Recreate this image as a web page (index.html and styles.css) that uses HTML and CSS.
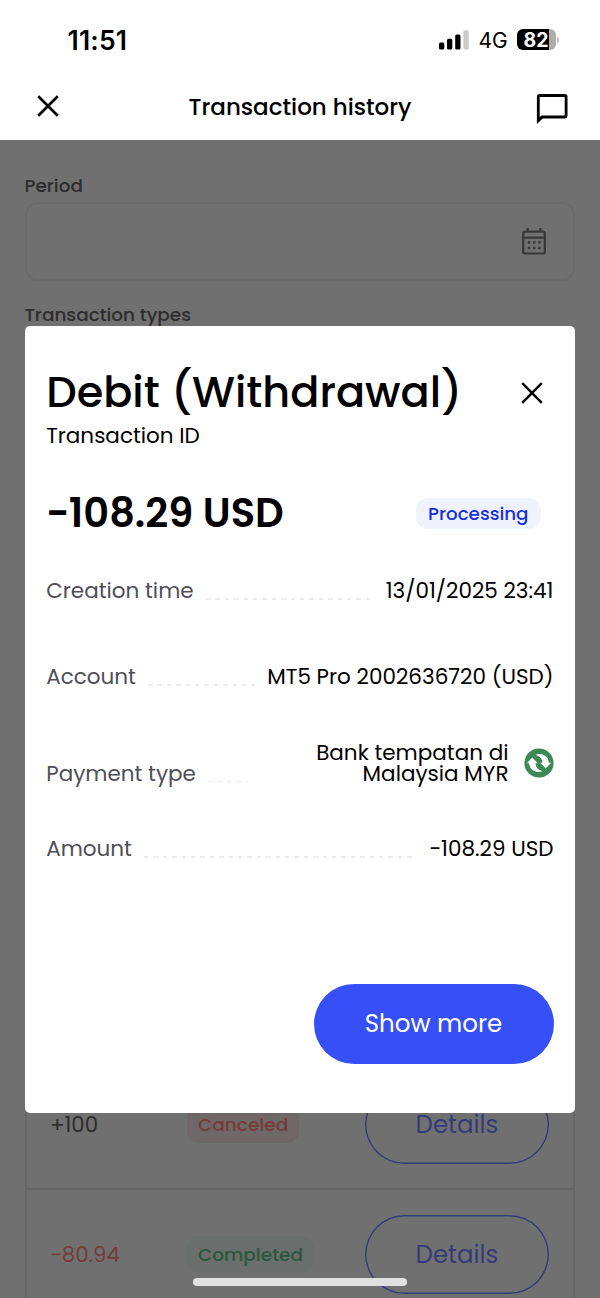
FILE: index.html
```html
<!DOCTYPE html>
<html lang="en">
<head>
<meta charset="utf-8">
<title>Transaction history</title>
<link rel="stylesheet" href="styles.css">
</head>
<body>
<div class="screen">
  <header class="top">
    <div class="status">
      <span class="time">11:51</span>
      <div class="status-right">
        <svg width="31" height="20" viewBox="0 0 31 20"><rect x="0" y="12.5" width="5.3" height="7" rx="1.5"/><rect x="8" y="8.8" width="5.3" height="10.7" rx="1.5"/><rect x="16.2" y="4.5" width="5.3" height="15" rx="1.5"/><rect x="24.4" y="0.3" width="5.3" height="19.2" rx="1.5" fill="#c9c9c9"/></svg>
        <span class="network">4G</span>
        <div class="battery"><span class="level">82</span><i class="battery-tip"></i></div>
      </div>
    </div>
    <nav class="nav">
      <svg class="nav-close" width="22" height="22" viewBox="0 0 22 22"><path d="M1.2 1.2 20.8 20.8M20.8 1.2 1.2 20.8" fill="none" stroke="#000" stroke-width="2.7"/></svg>
      <h1 class="nav-title">Transaction history</h1>
      <svg class="nav-chat" width="32" height="31" viewBox="0 0 32 31"><path fill="#000" fill-rule="evenodd" d="M3.7 0H28.7Q31.5 0 31.5 3V21.5Q31.5 24.4 28.7 24.4H6.7L.9 30V3Q.9 0 3.7 0ZM3.7 2.9V23L5.5 21.5H28.7V2.9Z"/></svg>
    </nav>
  </header>

  <main class="page">
    <div class="label">Period</div>
    <div class="date-field">
      <svg width="24" height="27" viewBox="0 0 24 27" fill="none" stroke="#383838" stroke-width="2.2"><rect x="1.2" y="3.7" width="21.6" height="21.8" rx="2"/><path d="M1 9.7H23M5.8 0V4M18.2 0V4"/><path d="M5.8 14.6h2.4m2.8 0h2.4m2.8 0h2.4M5.8 20h2.4m2.8 0h2.4m2.8 0h2.4" stroke-width="2.5"/></svg>
    </div>
    <div class="label label-types">Transaction types</div>
    <div class="table">
      <div class="row">
        <span class="sum">+100</span>
        <span class="tag tag-canceled">Canceled</span>
        <a class="details">Details</a>
      </div>
      <div class="row">
        <span class="sum sum-negative">−80.94</span>
        <span class="tag tag-completed">Completed</span>
        <a class="details">Details</a>
      </div>
    </div>
  </main>

  <section class="modal">
    <div class="modal-head">
      <h2 class="modal-title">Debit (Withdrawal)</h2>
      <svg width="22" height="22" viewBox="0 0 22 22"><path d="M1.2 1.2 20.8 20.8M20.8 1.2 1.2 20.8" fill="none" stroke="#000" stroke-width="2.5"/></svg>
    </div>
    <div class="transaction-id">Transaction ID</div>
    <div class="summary">
      <strong class="total">−108.29 USD</strong>
      <span class="badge">Processing</span>
    </div>
    <dl class="facts">
      <div class="fact"><dt>Creation time</dt><i class="leader"></i><dd>13/01/2025 23:41</dd></div>
      <div class="fact"><dt>Account</dt><i class="leader"></i><dd>MT5 Pro 2002636720 (USD)</dd></div>
      <div class="fact fact-payment">
        <dt>Payment type</dt><i class="leader"></i>
        <dd class="method">
          <span class="method-name">Bank tempatan di<br>Malaysia MYR</span>
          <svg width="30" height="30" viewBox="0 0 30 30"><circle cx="15" cy="15" r="14.6" fill="#3b8957"/><g fill="#fff"><path id="arrow" d="M8.3 9.6 13.8 15.2H11.6C11.6 18.6 13.6 21.6 18.6 23.2C11.4 25.8 5.4 21.4 5.1 15.2H2.8Z"/><use href="#arrow" transform="rotate(180 15 15)"/></g></svg>
        </dd>
      </div>
      <div class="fact"><dt>Amount</dt><i class="leader"></i><dd>−108.29 USD</dd></div>
    </dl>
    <button class="show-more">Show more</button>
  </section>
  <div class="home-indicator"></div>
</div>
</body>
</html>
```
FILE: styles.css
```css
* { box-sizing: border-box; }
body { margin: 0; font-family: Poppins, Inter, sans-serif; color: #000; }
h1, h2, dl, dd { margin: 0; font-weight: inherit; }
svg { display: block; flex: none; }
.screen { position: relative; width: 600px; height: 1298px; overflow: hidden; background: #707070; white-space: nowrap; }
.top { height: 140px; background: #fff; }
.status { display: flex; justify-content: space-between; height: 80px; padding: 0 41px 0 67.5px; font-family: Inter, sans-serif; }
.time { font-size: 26.5px; font-weight: 600; line-height: 81px; letter-spacing: 0.2px; }
.status-right { display: flex; align-items: center; height: 79px; }
.network { margin: 2px 0 0 9px; width: 29px; font-size: 21px; line-height: 78px; }
.battery { display: flex; align-items: center; gap: 1.5px; margin-left: 9px; }
.level { width: 39px; height: 21.5px; padding-left: 7px; border-radius: 6px; background: linear-gradient(90deg, #000 32px, #adadad 32px); color: #fff; font-size: 19.5px; font-weight: 700; line-height: 22.5px; }
.battery-tip { width: 2px; height: 6px; border-radius: 0 2px 2px 0; background: #bbb; }
.nav { display: flex; align-items: center; justify-content: space-between; height: 54px; padding: 0 31.5px 0 36.5px; }
.nav-close { margin-top: -2px; }
.nav-chat { margin-top: 4px; }
.nav-title { margin-left: 5px; font-size: 23px; font-weight: 500; line-height: 54px; }
.page { padding: 31px 25px 0 24.5px; }
.label { height: 31px; color: #2d2d2d; font-size: 18.4px; font-weight: 500; line-height: 30px; }
.date-field { display: flex; align-items: center; justify-content: flex-end; height: 79px; padding-right: 27px; border: 2px solid #6b6b6b; border-radius: 13px; }
.label-types { margin-top: 19px; }
.table { margin-top: 728px; border: 2px solid #666; border-top: 0; }
.row { display: grid; grid-template-columns: 137px 178px 184px; align-items: center; height: 131px; padding: 1px 0 0 23.5px; border-bottom: 2px solid #666; }
.row + .row { height: 129px; padding-top: 0; border-bottom: 0; }
.sum { color: #2d2d2d; font-size: 21.3px; }
.sum-negative { color: #763b3b; }
.tag { justify-self: start; height: 37px; padding: 0 11px; border-radius: 12px; font-size: 18.5px; font-weight: 500; line-height: 37px; }
.tag-canceled { background: #706868; color: #763b3b; }
.tag-completed { background: #6a6e6c; color: #2b5740; }
.details { height: 79px; border-radius: 40px; box-shadow: inset 0 0 0 1.4px #353b78; color: #353b78; font-size: 24.5px; line-height: 79px; text-align: center; }
.modal { position: absolute; left: 24.6px; top: 325.5px; width: 550.8px; height: 787px; padding: 32px 21.9px 49px 21.6px; border-radius: 5px; background: #fff; }
.modal-head { display: flex; align-items: center; justify-content: space-between; height: 70px; padding-right: 11px; }
.modal-title { font-size: 43px; font-weight: 500; line-height: 69px; }
.transaction-id { margin-top: -7px; font-size: 21.5px; line-height: 30px; }
.summary { display: flex; align-items: center; justify-content: space-between; height: 46px; margin-top: 39.5px; padding-right: 12.5px; }
.total { font-size: 40px; font-weight: 600; }
.badge { height: 31px; padding: 0 12.5px; border-radius: 12px; background: #eff3fe; color: #1a2fe0; font-size: 18.3px; font-weight: 500; line-height: 31px; }
.facts { margin-top: 40px; font-size: 21.5px; line-height: 30px; }
.fact { display: flex; gap: 12px; height: 30px; margin-bottom: 56px; }
.fact dt { color: #4e4e58; }
.leader { flex: 1; height: 1.5px; margin-top: 22px; background: repeating-linear-gradient(90deg, #ececee 0 4.5px, transparent 4.5px 9.4px); }
.fact-payment { align-items: flex-end; height: 48px; margin: -7px 0 45px; }
.fact-payment .leader { margin-bottom: 7px; }
.method { display: flex; align-items: center; justify-content: flex-end; gap: 15px; width: 294px; height: 47px; padding-bottom: 5px; }
.method-name { text-align: right; line-height: 21.5px; }
.show-more { display: block; width: 240px; height: 80px; margin: 120px 0 0 auto; padding: 0; border: 0; border-radius: 40px; background: #374ff6; color: #fff; font: inherit; font-size: 24.5px; line-height: 78px; }
.home-indicator { position: absolute; left: 193px; top: 1278px; width: 214px; height: 8px; border-radius: 4px; background: #e0e0e0; }
```
